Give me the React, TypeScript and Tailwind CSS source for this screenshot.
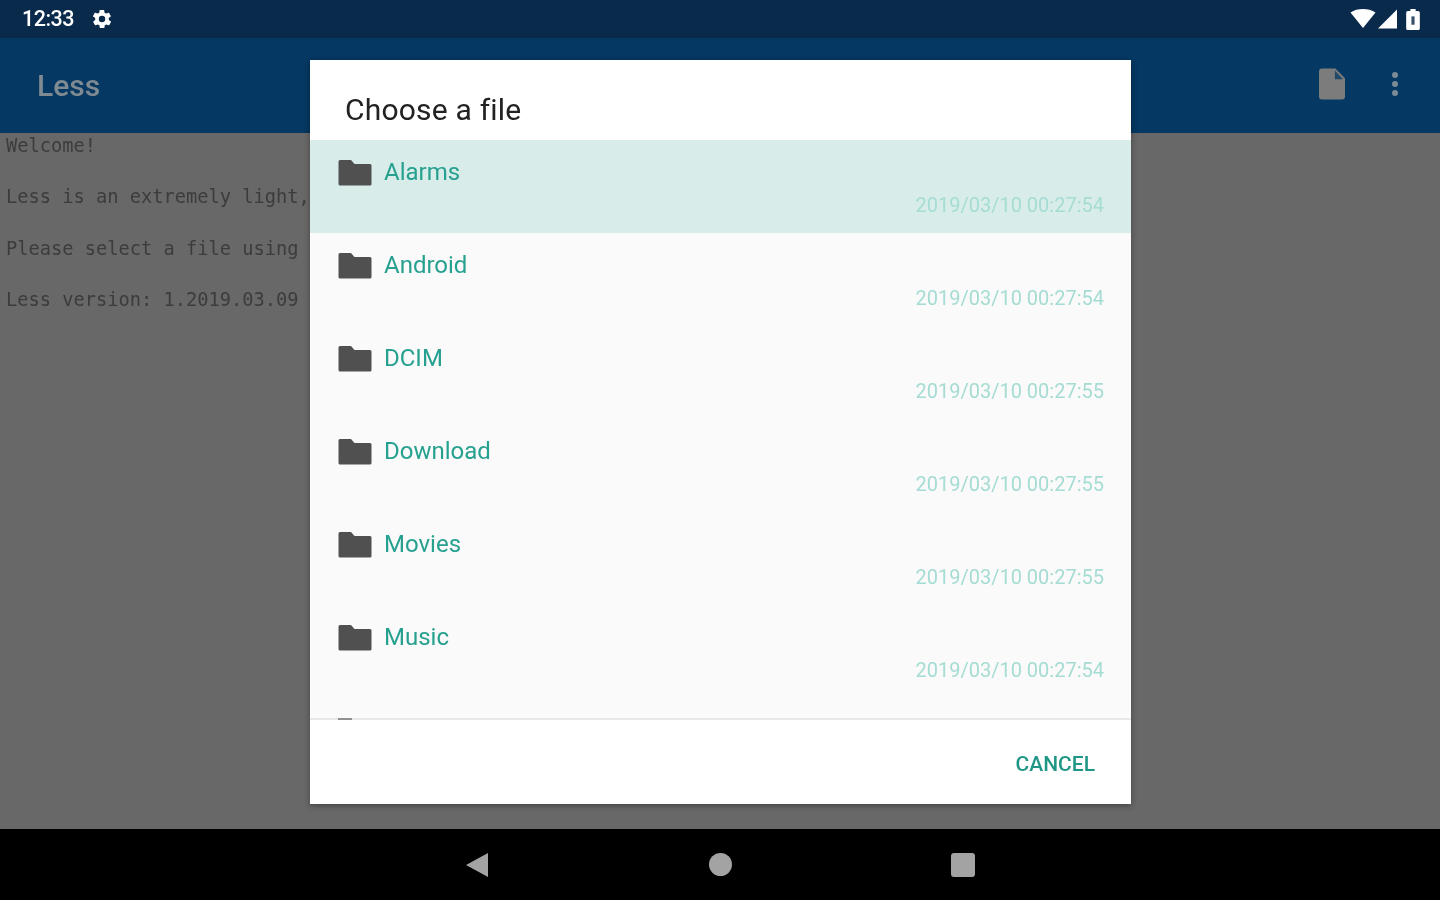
const rows = [
  { name: 'Alarms', date: '2019/03/10 00:27:54', selected: true },
  { name: 'Android', date: '2019/03/10 00:27:54' },
  { name: 'DCIM', date: '2019/03/10 00:27:55' },
  { name: 'Download', date: '2019/03/10 00:27:55' },
  { name: 'Movies', date: '2019/03/10 00:27:55' },
  { name: 'Music', date: '2019/03/10 00:27:54' },
]

function Folder() {
  return (
    <svg width="34" height="26" viewBox="0 0 34 26" className="block">
      <path d="M2 0h11l3.500 4H32a1.500 1.500 0 0 1 1.500 1.500V24a1.500 1.500 0 0 1-1.500 1.500H2A1.500 1.500 0 0 1 .5 24V1.500A1.500 1.500 0 0 1 2 0z" fill="#505050" />
    </svg>
  )
}

function StatusBar() {
  return (
    <div className="flex h-[38px] shrink-0 items-center justify-between bg-[#0a2a4c] pl-[22px] pr-[20px] text-white">
      <div className="flex items-center gap-[17px]">
        <span className="text-[21.500px] font-medium leading-none tracking-[-0.5px]">12:33</span>
        <svg width="22" height="22" viewBox="0 0 24 24" fill="#fff">
          <path d="M19.400 13a7.500 7.500 0 0 0 0-2l2.100-1.600a.5.5 0 0 0 .1-.6l-2-3.500a.5.5 0 0 0-.6-.2l-2.500 1a7.300 7.300 0 0 0-1.700-1l-.4-2.600a.5.5 0 0 0-.5-.4h-4a.5.5 0 0 0-.5.4l-.4 2.600a7.300 7.300 0 0 0-1.700 1l-2.500-1a.5.5 0 0 0-.6.2l-2 3.500a.5.5 0 0 0 .1.6L4.600 11a7.500 7.500 0 0 0 0 2l-2.100 1.600a.5.5 0 0 0-.1.6l2 3.500a.5.5 0 0 0 .6.2l2.500-1c.5.4 1.100.7 1.700 1l.4 2.600a.5.5 0 0 0 .5.4h4a.5.5 0 0 0 .5-.4l.4-2.600c.6-.3 1.200-.6 1.700-1l2.500 1a.5.5 0 0 0 .6-.2l2-3.500a.5.5 0 0 0-.1-.6zM12 15.500a3.500 3.500 0 1 1 0-7 3.500 3.500 0 0 1 0 7z" />
        </svg>
      </div>
      <div className="flex items-center">
        <svg width="26" height="20" viewBox="0 0 25 20" fill="#fff"><path d="M0 3.500C3.500 1 8 0 12.500 0S21.500 1 25 3.500L12.500 19z" /></svg>
        <svg width="19" height="20" viewBox="0 0 18 18" fill="#fff" className="ml-[2px]"><path d="M18 0v18H0z" /></svg>
        <svg width="14" height="21" viewBox="0 0 13 20" className="ml-[9px]"><path d="M4 0h5v2h2.500A1.500 1.500 0 0 1 13 3.500v15a1.500 1.500 0 0 1-1.500 1.500h-10A1.500 1.500 0 0 1 0 18.500v-15A1.500 1.500 0 0 1 1.500 2H4z" fill="#fff" /><rect x="5" y="7" width="3" height="8" fill="#39506a" /></svg>
      </div>
    </div>
  )
}

function AppBar() {
  return (
    <div className="flex h-[95px] shrink-0 items-center justify-between bg-[#053862] pl-[37px] pr-[42px]">
      <span className="text-[30px] font-medium leading-none text-[#7f8a93]">Less</span>
      <div className="flex items-center gap-[47px]">
        <svg width="26" height="32" viewBox="0 0 27 32" fill="#7c7c7c" className="mt-[-3px]"><path d="M3 0h14l10 10v19a3 3 0 0 1-3 3H3a3 3 0 0 1-3-3V3a3 3 0 0 1 3-3z" /><path d="M16.500 2v9h8.500z" fill="#053862" opacity=".75" /></svg>
        <div className="mt-[-3px] flex flex-col gap-[3px]">
          <span className="h-[6px] w-[6px] rounded-full bg-[#7c8c96]" />
          <span className="h-[6px] w-[6px] rounded-full bg-[#7c8c96]" />
          <span className="h-[6px] w-[6px] rounded-full bg-[#7c8c96]" />
        </div>
      </div>
    </div>
  )
}

function NavBar() {
  return (
    <div className="flex h-[71px] shrink-0 items-center justify-center gap-[219px] bg-black">
      <svg width="24" height="26" viewBox="0 0 24 26" fill="#a3a3a3"><path d="M22 1v24L0 13z" /></svg>
      <span className="h-[23px] w-[23px] rounded-full bg-[#a3a3a3]" />
      <span className="h-[24px] w-[24px] rounded-[3px] bg-[#a3a3a3]" />
    </div>
  )
}

export default function App() {
  return (
    <div className="h-[900px] w-[1440px] overflow-hidden bg-black">
      <div className="relative flex h-[900px] w-[1440px] flex-col bg-[#686868] font-['Roboto',sans-serif] blur-[0.7px]">
        <StatusBar />
        <AppBar />
        <div className="flex-1 whitespace-pre pl-[6px] font-['DejaVu_Sans_Mono',monospace] text-[18.700px] leading-[25.670px] text-[#3c3c3c]">
          <div>Welcome!</div>
          <div className="mt-[25.670px]">Less is an extremely light,</div>
          <div className="mt-[25.670px]">Please select a file using</div>
          <div className="mt-[25.670px]">Less version: 1.2019.03.09</div>
        </div>
        <NavBar />

        <div className="absolute left-[310px] top-[60px] flex h-[744px] w-[821px] flex-col bg-white shadow-[0_2px_6px_rgba(0,0,0,0.35)]">
          <div className="h-[80px] shrink-0 pl-[35px] pt-[33px] text-[30px] leading-[34px] tracking-[0.2px] text-[#222222]">Choose a file</div>
          <div className="h-[578px] shrink-0 overflow-hidden bg-[#fafafa]">
            {rows.map((row) => (
              <div key={row.name} className={`h-[93px] pl-[28px] pr-[27px] ${row.selected ? 'bg-[#d8ede9]' : ''}`}>
                <div className="flex items-start gap-[12px] pt-[20px]">
                  <Folder />
                  <span className="mt-[-1px] text-[24px] leading-[26px] text-[#26a08f]">{row.name}</span>
                </div>
                <div className="mt-[6px] text-right text-[20px] leading-[26px] text-[#a5dcd3]">{row.date}</div>
              </div>
            ))}
          </div>
          <div className="relative flex flex-1 items-start justify-end border-t-2 border-[#e8e8e8] pr-[36px] pt-[31px]">
            <span className="absolute left-[28px] top-[-2px] h-[2px] w-[14px] bg-[#909090]" />
            <span className="text-[21px] font-medium leading-[26px] text-[#1f9787]">CANCEL</span>
          </div>
        </div>
      </div>
    </div>
  )
}
